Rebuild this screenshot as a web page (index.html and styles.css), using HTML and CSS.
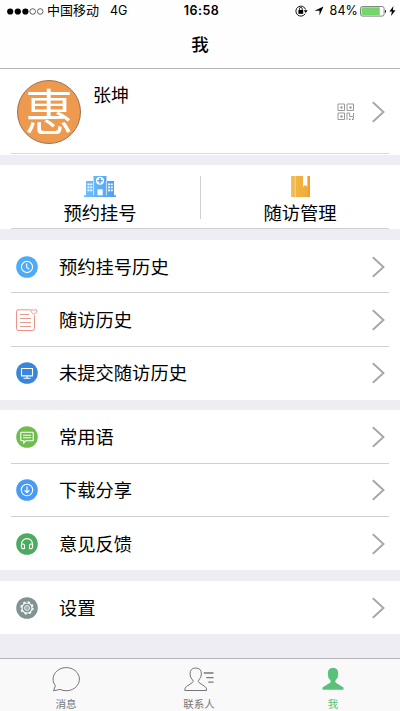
FILE: index.html
```html
<!DOCTYPE html>
<html lang="zh-CN">
<head>
<meta charset="utf-8">
<title>我</title>
<link rel="stylesheet" href="styles.css">
</head>
<body>
<svg class="defs" width="0" height="0">
  <symbol id="chevron" viewBox="0 0 14 22"><path d="M1.800 1.200 12.500 11 1.800 20.800" fill="none" stroke="#a6a6a6" stroke-width="1.9"/></symbol>
</svg>
<div class="app">
  <header class="header">
    <div class="status">
      <div class="status-left">
        <svg class="signal" width="37" height="7" viewBox="0 0 37 7"><g fill="#000"><circle cx="3.2" cy="3.5" r="3.1"/><circle cx="10.8" cy="3.5" r="3.1"/><circle cx="18.4" cy="3.5" r="3.1"/></g><g fill="none" stroke="#222" stroke-width=".7"><circle cx="25.7" cy="3.5" r="2.8"/><circle cx="33.2" cy="3.5" r="2.8"/></g></svg>
        <span class="carrier">中国移动</span><span class="network">4G</span>
      </div>
      <div class="time">16:58</div>
      <div class="status-right">
        <svg class="lock" width="13" height="12" viewBox="0 0 13 12"><path d="M10.2 8.7A5 5 0 1 1 10.6 4.4" fill="none" stroke="#111"/><path d="M8.7 5.2h4L10.7 8z"/><rect x="3.4" y="5" width="4.8" height="3.8"/><path d="M4.4 5V3.8a1.4 1.4 0 0 1 2.8 0V5" fill="none" stroke="#111" stroke-width=".9"/></svg>
        <svg class="arrow" width="10" height="10" viewBox="0 0 10 10"><path d="M9.5.5 5.5 9.5V4.8H.5z"/></svg>
        <span class="percent">84%</span>
        <svg class="battery" width="27" height="11" viewBox="0 0 27 11"><rect x=".5" y=".5" width="23.6" height="9.6" rx="2" fill="#fff" stroke="#666" stroke-width=".8"/><path d="M1.500 1.300h18.300v8H1.500z" fill="#74d56b"/><path d="M25 3.6q2 1.8 0 3.7z"/></svg>
        <svg class="bolt" width="7" height="10" viewBox="0 0 7 10"><path d="M4.5 0 .4 5.5h2.5L2 10l4.5-5.8H3.8z"/></svg>
      </div>
    </div>
    <h1 class="title">我</h1>
  </header>

  <main class="content">
    <section class="profile">
      <div class="avatar">惠</div>
      <div class="name">张坤</div>
      <svg class="qr" width="18" height="18" viewBox="0 0 18 18"><g fill="none" stroke="#999" stroke-width="1"><path d="M1 1h6.5v6.5H1zM10 1h6.5v6.5H10zM1 10h6.5v6.5H1zM10 17v-7h2.7v3.5h3.8V10M16.5 14v1.5"/></g><path d="M3.5 3.5h2v2h-2zM12.5 3.5h2v2h-2zM3.5 12.5h2v2h-2zM12 15.5h1.5V17H12zM15 15.5h1.5V17H15z" fill="#888"/></svg>
      <svg class="chevron"><use href="#chevron"/></svg>
    </section>

    <section class="shortcuts">
      <div class="shortcut">
        <svg width="32" height="21" viewBox="0 0 32 21"><defs><linearGradient id="blue"><stop stop-color="#6fc0fa"/><stop offset="1" stop-color="#4f9cf1"/></linearGradient></defs><path d="M0 19.3h2V5h7.5V0h13v5H30v14.3h2V21H0z" fill="url(#blue)"/><path d="M9.6 5v14.3M22.4 5v14.3" stroke="#fff" stroke-width=".7"/><circle cx="16" cy="4.7" r="4" fill="#fff"/><path d="M16 2v5.4M13.3 4.7h5.4" stroke="#55a5f4" stroke-width="1.6"/><path d="M13.5 13.3h5.2v6h-5.2z" fill="#fff"/><path d="M3.5 8.3h2M6.3 8.3h2M3.5 11.3h2M6.3 11.3h2M3.5 14.3h2M6.3 14.3h2M24 8.3h2M26.8 8.3h2M24 11.3h2M26.8 11.3h2M24 14.3h2M26.8 14.3h2" stroke="#fff" stroke-width="1.7"/></svg>
        <span>预约挂号</span>
      </div>
      <div class="shortcut">
        <svg width="19" height="21" viewBox="0 0 19 21"><defs><linearGradient id="gold"><stop stop-color="#f4b83f"/><stop offset="1" stop-color="#eeaa3f"/></linearGradient></defs><rect width="19" height="21" rx=".8" fill="url(#gold)"/><path d="M1 0v21" stroke="#f4c574"/><path d="M4.2 0v21" stroke="#f8d38c" stroke-width="1.2"/><path d="M18 0v21" stroke="#ee9f2c" stroke-width="2"/><path d="M12 0h4.3v10.8L14.2 9 12 10.8z" fill="#fff"/></svg>
        <span>随访管理</span>
      </div>
    </section>

    <section class="group">
      <div class="row">
        <svg class="icon" viewBox="0 0 22 22"><circle cx="11" cy="11" r="10.8" fill="#4eabf6"/><circle cx="11" cy="11" r="5.6" fill="none" stroke="#fff" stroke-width="1.1"/><path d="M10.7 7.5v3.8l2.5 2.1" fill="none" stroke="#fff" stroke-width="1.1"/></svg>
        <span>预约挂号历史</span><svg class="chevron"><use href="#chevron"/></svg>
      </div>
      <div class="row">
        <svg class="icon" viewBox="0 0 22 22"><g fill="none" stroke="#ee9184" stroke-width="1"><path d="M14.5.8H2Q.5.8.5 2.300v17.200Q.5 21.500 2 21.500h14.500q2 0 2-2V6.500"/><path d="M17.800 5.500 15 2.600q-.5-1.600 1-2 1.300 0 1.800 1 .8-1.100 2.100-1 1.800.6 1 2.200z"/><path d="M4 5.500h9M4 9.500h11M4 13.500h11M4 17.500h11" stroke="#e79b90"/></g></svg>
        <span>随访历史</span><svg class="chevron"><use href="#chevron"/></svg>
      </div>
      <div class="row">
        <svg class="icon" viewBox="0 0 22 22"><circle cx="11" cy="11" r="10.8" fill="#3987da"/><path d="M5.500 6.500h11v7.400h-11zM11 14v2M7.500 16.300h7" fill="none" stroke="#fff" stroke-width="1.100"/></svg>
        <span>未提交随访历史</span><svg class="chevron"><use href="#chevron"/></svg>
      </div>
    </section>

    <section class="group">
      <div class="row">
        <svg class="icon" viewBox="0 0 22 22"><circle cx="11" cy="11" r="10.8" fill="#6fbd4c"/><path d="M5.500 6.300h11q.7 0 .7.700v7q0 .7-.7.700H9.800l-2 2.300v-2.300H5.500q-.7 0-.7-.7V7q0-.7.7-.7zM7 9.200h8.200M7 11.700h8.200" fill="none" stroke="#fff" stroke-width="1.100"/></svg>
        <span>常用语</span><svg class="chevron"><use href="#chevron"/></svg>
      </div>
      <div class="row">
        <svg class="icon" viewBox="0 0 22 22"><circle cx="11" cy="11" r="10.8" fill="#499af4"/><circle cx="11" cy="11" r="5.700" fill="none" stroke="#fff" stroke-width="1.100"/><path d="M11 7.500v6M8.600 11.300 11 13.700l2.400-2.400" fill="none" stroke="#fff" stroke-width="1.200"/></svg>
        <span>下载分享</span><svg class="chevron"><use href="#chevron"/></svg>
      </div>
      <div class="row">
        <svg class="icon" viewBox="0 0 22 22"><circle cx="11" cy="11" r="10.8" fill="#4cab60"/><path d="M5.500 14v-3.200a5.500 5.200 0 0 1 11 0V14" fill="none" stroke="#fff" stroke-width="1.200"/><path d="M5.500 11.200q3-.7 3 1.300v3q-3 .6-3-1.500zM16.500 11.200q-3-.7-3 1.300v3q3 .6 3-1.500z" fill="none" stroke="#fff" stroke-width="1.100"/></svg>
        <span>意见反馈</span><svg class="chevron"><use href="#chevron"/></svg>
      </div>
    </section>

    <section class="group">
      <div class="row">
        <svg class="icon" viewBox="0 0 22 22"><circle cx="11" cy="11" r="10.8" fill="#819393"/><circle cx="11" cy="11" r="5" fill="none" stroke="#fff" stroke-width="1.100"/><circle cx="11" cy="11" r="6" fill="none" stroke="#fff" stroke-width="1.400" stroke-dasharray="2.350 2.362"/><circle cx="11" cy="11" r="2.400" fill="none" stroke="#fff"/><circle cx="11" cy="11" r=".7" fill="#fff"/></svg>
        <span>设置</span><svg class="chevron"><use href="#chevron"/></svg>
      </div>
    </section>
  </main>

  <nav class="tabs">
    <div class="tab">
      <svg width="30" height="26" viewBox="0 0 30 26"><path d="M4.400 18.800A13.200 11.600 0 1 1 9 22.400L2.500 23.800z" fill="none" stroke="#777" stroke-width="1"/></svg>
      <span>消息</span>
    </div>
    <div class="tab">
      <svg width="30" height="26" viewBox="0 0 30 26"><path d="M.8 23.500q-.3-2.700 1.700-4l6-4q1.400-1 .1-2.400Q6 10.500 6 7q0-6 5.700-6t5.700 6q0 3.500-2.600 6.100-1.300 1.400.1 2.400l6 4q2 1.300 1.700 4z" fill="none" stroke="#777"/><path d="M19.800 6H29.500M22.300 10.700h7.200M24.300 15.200h5.200" stroke="#777" stroke-width="1.300"/></svg>
      <span>联系人</span>
    </div>
    <div class="tab active">
      <svg width="22" height="26" viewBox="0 0 22 26"><path d="M.5 22.700v-2.300l7.600-4.600q1.300-1 .2-2.700Q5.800 11 5.800 7 5.800.7 11 .7T16.200 7q0 4-2.500 6.100-1.100 1.700.2 2.700l7.600 4.600v2.300z" fill="#58c17a"/></svg>
      <span>我</span>
    </div>
  </nav>
</div>
</body>
</html>
```
FILE: styles.css
```css
* { box-sizing: border-box; }
body {
  margin: 0;
  color: #000;
  font-family: "Liberation Sans", "Noto Sans CJK SC", sans-serif;
}
svg { display: block; flex: none; }
.defs { position: absolute; }
.app {
  width: 400px;
  height: 711px;
  display: flex;
  flex-direction: column;
  overflow: hidden;
  background: #eeedf3;
}
.header {
  height: 69px;
  background: #fefefe;
  border-bottom: 1px solid #b5b5b9;
}
.status {
  height: 22px;
  padding: 0 4px 0 7px;
  display: grid;
  grid-template-columns: 1fr 40px 1fr;
  align-items: center;
  font-size: 13px;
  line-height: 20px;
}
.status-left, .status-right { display: flex; align-items: center; }
.status-right { justify-content: flex-end; }
.carrier { margin-left: 3px; }
.network { margin-left: 11px; }
.time {
  font-family: Inter, sans-serif;
  font-weight: 600;
  font-size: 12.500px;
  letter-spacing: .5px;
  text-align: center;
  white-space: nowrap;
}
.network, .percent { font-family: Inter, sans-serif; font-size: 12.500px; }
.percent { letter-spacing: .1px; }
.arrow { margin: 0 6px; }
.battery { margin-left: 2px; }
.bolt { margin-left: 2px; }
.title {
  margin: 9px 0 0;
  text-align: center;
  font-size: 17.500px;
  line-height: 28px;
  font-weight: 500;
}
.content { flex: 1; display: flex; flex-direction: column; }
.profile {
  height: 86px;
  display: flex;
  align-items: center;
  padding: 0 15px 0 17px;
  background: linear-gradient(#d8d8da, #d8d8da) 11px 84px / 378px 1px no-repeat #fff;
}
.avatar {
  width: 64px;
  height: 64px;
  flex: none;
  border: 1px solid #9c7250;
  border-radius: 50%;
  background: #ed994e;
  color: #fff;
  font-size: 49px;
  line-height: 64px;
  display: flex;
  justify-content: center;
}
.name { margin: 0 auto 33px 12px; font-size: 18px; line-height: 26px; }
.qr { margin-right: 16px; }
.chevron { width: 14px; height: 22px; }
.shortcuts {
  height: 64px;
  margin-top: 10px;
  display: grid;
  grid-template-columns: 1fr 1fr;
  background: linear-gradient(#d0d0d2, #d0d0d2) 11px 63px / 378px 1px no-repeat,
    linear-gradient(#d0d0d2, #d0d0d2) 200px 11px / 1px 43px no-repeat #fff;
}
.shortcut {
  display: flex;
  flex-direction: column;
  align-items: center;
  padding-top: 11px;
  font-size: 18.300px;
  line-height: 34px;
}
.group { margin-top: 11px; background: #fff; }
.group + .group { margin-top: 10.500px; }
.row {
  height: 53.330px;
  padding: 0 15px 0 16px;
  display: flex;
  align-items: center;
  font-size: 18.300px;
}
.row:not(:last-child) {
  background: linear-gradient(#d0d0d2, #d0d0d2) 11px 100% / 378px 1px no-repeat;
}
.row span { margin: 0 auto 2px 21px; }
.icon { width: 22px; height: 22px; }
.tabs {
  height: 53px;
  border-top: 1px solid #b3b3b7;
  background: #f9f9f9;
  display: grid;
  grid-template-columns: 132px 134px 134px;
}
.tab {
  display: flex;
  flex-direction: column;
  align-items: center;
  padding-top: 8px;
  color: #777;
  font-size: 10.500px;
  line-height: 22px;
}
.active { color: #58c17a; }
```
